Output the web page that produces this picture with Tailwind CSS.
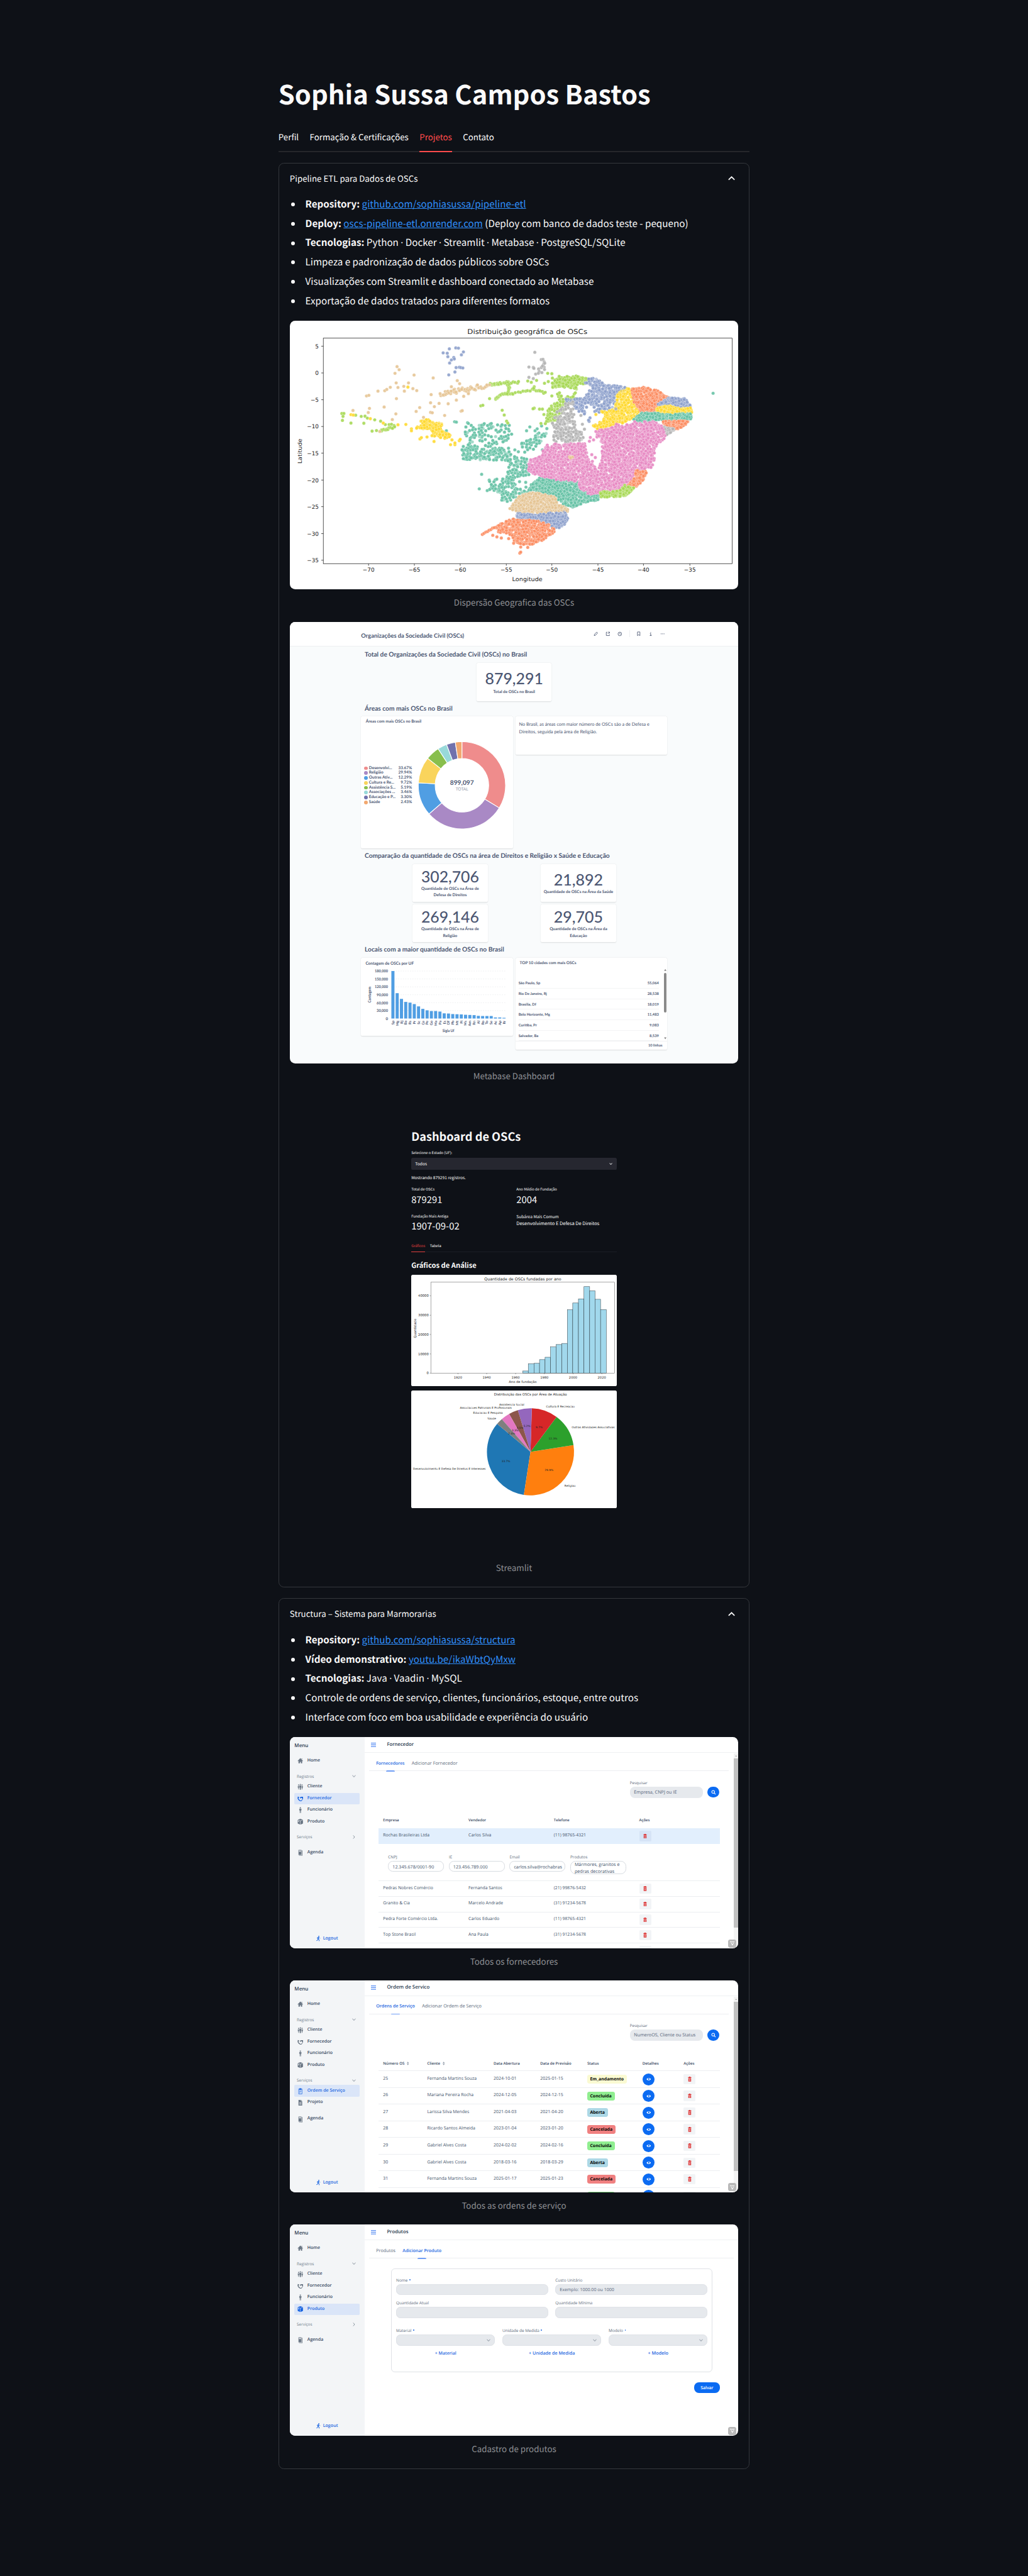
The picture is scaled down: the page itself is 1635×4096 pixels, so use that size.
<!DOCTYPE html>
<html lang="pt-BR">
<head>
<meta charset="utf-8">
<title>Sophia Sussa Campos Bastos</title>
<script src="https://cdn.jsdelivr.net/npm/@tailwindcss/browser@4"></script>
</head>
<body class="bg-[#0e1117] overflow-x-hidden">
<div class="[zoom:0.8515625] [text-rendering:geometricPrecision]">
<div id="page" class="w-[1920px] h-[4810px] overflow-hidden bg-[#0e1117] text-[#fafafa] font-['Noto_Sans_CJK_JP','Noto_Sans_CJK_SC',sans-serif]">
<main class="w-[880px] mx-auto pt-[142px]">
  <h1 class="h-[66px] leading-[66px] text-[49.5px] font-bold whitespace-nowrap"><span data-w="695">Sophia Sussa Campos Bastos</span></h1>

  <nav class="mt-[23.2px] h-[52.5px] flex gap-[20.5px] border-b-[2.5px] border-[#26272b] text-[15.75px] leading-[50px] whitespace-nowrap">
    <span data-g="nav" data-w="38">Perfil</span>
    <span data-g="nav" data-w="184.5">Formação &amp; Certificações</span>
    <span data-g="nav" data-w="60" class="h-[52.5px] border-b-[2.5px] border-[#ff4b4b] text-[#ff4b4b]">Projetos</span>
    <span data-g="nav" data-w="58.5">Contato</span>
  </nav>

  <!-- Pipeline ETL -->
  <section class="mt-5 border-[1.25px] border-[#34373c] rounded-[10px] px-5 pb-[23.2px]">
    <header class="h-[56.7px] flex items-center justify-between text-[15.75px] leading-[26px]">
      <span data-g="nav" data-w="240">Pipeline ETL para Dados de OSCs</span>
      <svg class="mr-[6px] -mt-[1px]" width="13" height="8" viewBox="0 0 13 8" fill="none" stroke="#fafafa" stroke-width="2"><path d="M1 7 6.5 1.5 12 7"/></svg>
    </header>
    <ul class="mt-[1.6px] pl-[9px] text-[18px] leading-[36px] whitespace-nowrap">
      <li class="h-[36px] flex items-center gap-[19px]"><i class="w-[7px] h-[7px] -ml-[6px] mt-[2px] rounded-full bg-[#fafafa]"></i><span><b data-g="li" data-w="98">Repository:</b> <a class="underline text-[#2f8ffb]" data-g="lk" data-w="306">github.com/sophiasussa/pipeline-etl</a></span></li>
      <li class="h-[36px] flex items-center gap-[19px]"><i class="w-[7px] h-[7px] -ml-[6px] mt-[2px] rounded-full bg-[#fafafa]"></i><span><b data-g="li">Deploy:</b> <a class="underline text-[#2f8ffb]" data-g="lk" data-w="260">oscs-pipeline-etl.onrender.com</a> <span data-w="379.5">(Deploy com banco de dados teste - pequeno)</span></span></li>
      <li class="h-[36px] flex items-center gap-[19px]"><i class="w-[7px] h-[7px] -ml-[6px] mt-[2px] rounded-full bg-[#fafafa]"></i><span><b data-g="li">Tecnologias:</b> <span data-g="li">Python <span class="font-['Open_Sans']">·</span> Docker <span class="font-['Open_Sans']">·</span> Streamlit <span class="font-['Open_Sans']">·</span> Metabase <span class="font-['Open_Sans']">·</span> PostgreSQL/SQLite</span></span></li>
      <li class="h-[36px] flex items-center gap-[19px]"><i class="w-[7px] h-[7px] -ml-[6px] mt-[2px] rounded-full bg-[#fafafa]"></i><span data-g="li" data-w="455">Limpeza e padronização de dados públicos sobre OSCs</span></li>
      <li class="h-[36px] flex items-center gap-[19px]"><i class="w-[7px] h-[7px] -ml-[6px] mt-[2px] rounded-full bg-[#fafafa]"></i><span data-g="li" data-w="540">Visualizações com Streamlit e dashboard conectado ao Metabase</span></li>
      <li class="h-[36px] flex items-center gap-[19px]"><i class="w-[7px] h-[7px] -ml-[6px] mt-[2px] rounded-full bg-[#fafafa]"></i><span data-g="li" data-w="457">Exportação de dados tratados para diferentes formatos</span></li>
    </ul>

    <figure class="mt-[19.9px]">
      <div class="h-[501.7px] bg-white rounded-[10px] overflow-hidden"><svg id="scatter" class="block" width="838" height="502" viewBox="0 0 838 502" font-family="DejaVu Sans, sans-serif"></svg></div>
      <figcaption class="mt-[10px] h-[26.4px] leading-[26.4px] text-center text-[15.75px] text-[#8d8f93]"><span data-w="225">Dispersão Geografica das OSCs</span></figcaption>
    </figure>

    <!-- Metabase -->
    <figure class="mt-[24.4px]">
      <div class="h-[824.2px] bg-[#f9fbfc] rounded-[10px] overflow-hidden font-['Lato',sans-serif] text-[#4c5773] whitespace-nowrap">
        <div class="h-[46px] bg-white border-b border-[#eeeff1] flex items-center justify-between pl-[133.3px] pr-[137px] pt-[6px] font-bold text-[10.5px]">
          <span data-w="192.5">Organizações da Sociedade Civil (OSCs)</span>
          <div class="flex items-center gap-[13px] -mt-[7px]">
            <svg width="9" height="9" viewBox="0 0 9 9" fill="none" stroke="#4c5773" stroke-width="1"><path d="M1.2 7.8 1.8 5.4 6 1.2 7.7 2.9 3.5 7.2Z"/></svg>
            <svg width="9" height="9" viewBox="0 0 9 9" fill="none" stroke="#4c5773" stroke-width="1"><path d="M3.6 1.5H1.5V7.7H7.4V5.6M5 1.2H7.6V3.8M7.4 1.4 4.2 4.8"/></svg>
            <svg width="9" height="9" viewBox="0 0 9 9" fill="none" stroke="#4c5773" stroke-width="1"><circle cx="4.5" cy="4.7" r="3.4"/><path d="M4.5 2.8V4.8L5.8 5.6"/></svg>
            <i class="w-px h-[13px] bg-[#eceef0]"></i>
            <svg width="9" height="9" viewBox="0 0 9 9" fill="none" stroke="#4c5773" stroke-width="1"><path d="M2.2 1H6.8V8L4.5 6 2.2 8Z"/></svg>
            <svg width="9" height="9" viewBox="0 0 9 9" fill="none" stroke="#4c5773" stroke-width="1.1"><path d="M3.3 4H4.7V7.6M3 7.7H6.3M4.6 1.2V2.4"/></svg>
            <svg width="9" height="9" viewBox="0 0 9 9" fill="#4c5773"><circle cx="1.8" cy="4.5" r=".8"/><circle cx="4.5" cy="4.5" r=".8"/><circle cx="7.2" cy="4.5" r=".8"/></svg>
          </div>
        </div>
        <div class="w-[571.6px] ml-[133.3px]">
          <h3 class="h-[30.3px] pl-[6.7px] leading-[32px] text-[11.5px] font-bold"><span data-g="mh" data-w="304">Total de Organizações da Sociedade Civil (OSCs) no Brasil</span></h3>
          <div class="w-[140.4px] h-[71px] mx-auto bg-white rounded-[3px] shadow-[0_1px_2px_rgba(0,0,0,.12)] text-center pt-[14px]">
            <div class="h-[32px] leading-[32px] text-[29.5px]"><span class="font-medium" data-w="108.6">879,291</span></div>
            <div class="h-[12px] leading-[13px] text-[7.5px] mt-[1.5px] font-bold"><span data-g="ml" data-w="77.9">Total de OSCs no Brasil</span></div>
          </div>
          <h3 class="h-[29px] pl-[6.7px] leading-[30px] text-[11.5px] font-bold"><span data-g="mh" data-w="163.5">Áreas com mais OSCs no Brasil</span></h3>
          <div class="flex gap-[4.4px] items-start">
            <div class="w-[283.6px] h-[246.7px] bg-white rounded-[3px] shadow-[0_1px_2px_rgba(0,0,0,.12)]">
              <div class="pl-[8.7px] h-[21px] leading-[20px] text-[7.5px] font-bold"><span data-g="ml" data-w="104">Áreas com mais OSCs no Brasil</span></div>
              <div class="flex items-center h-[215px]">
                <div id="legend" class="w-[95px] ml-[6px]"></div>
                <svg id="donut" class="ml-[4px]" width="166" height="166" viewBox="-83 -83 166 166" font-family="Lato, sans-serif"></svg>
              </div>
            </div>
            <div class="w-[283.6px] h-[71px] bg-white rounded-[3px] shadow-[0_1px_2px_rgba(0,0,0,.12)] pl-[7.1px] pt-[8.4px] text-[8px] leading-[14px]">
              <p class="h-[14px]"><span data-w="243">No Brasil, as áreas com maior número de OSCs são a de Defesa e</span></p>
              <p class="h-[14px]"><span data-w="145.4">Direitos, seguida pela área de Religião.</span></p>
            </div>
          </div>
          <h3 class="h-[28.5px] pl-[6.7px] leading-[29.5px] text-[11.5px] font-bold"><span data-g="mh" data-w="457.5">Comparação da quantidade de OSCs na área de Direitos e Religião x Saúde e Educação</span></h3>
          <div id="kpis" class="grid grid-cols-[140.4px_140.4px] gap-x-[99.3px] gap-y-[4px] ml-[96px]"></div>
          <h3 class="h-[29px] pl-[6.7px] leading-[30px] text-[11.5px] font-bold"><span data-g="mh" data-w="260">Locais com a maior quantidade de OSCs no Brasil</span></h3>
          <div class="flex gap-[4.4px] items-start">
            <div class="w-[283.6px] h-[146.3px] bg-white rounded-[3px] shadow-[0_1px_2px_rgba(0,0,0,.12)]"><svg id="ufbars" class="block" width="283.6" height="146.3" viewBox="0 0 283.6 146.3" font-family="Lato, sans-serif" fill="#4c5773"></svg></div>
            <div class="w-[283.6px] h-[171.3px] bg-white rounded-[3px] shadow-[0_1px_2px_rgba(0,0,0,.12)] flex flex-col text-[7px]">
              <div class="pl-[8.2px] h-[20.5px] leading-[20.5px] text-[7.5px] font-bold"><span data-w="105.8">TOP 10 cidades com mais OSCs</span></div>
              <div class="flex h-[135.1px]">
                <div id="cities" class="flex-1 pt-[17.6px] pl-[6px] pr-[9px] font-bold"></div>
                <div class="w-[5px] mr-[1.5px] flex flex-col items-center">
                  <svg width="5" height="5" viewBox="0 0 5 5" fill="#858585"><path d="M.3 4.5 2.5 1 4.7 4.5Z"/></svg>
                  <i class="mt-[3px] w-[4.6px] h-[74px] rounded-full bg-[#8a8a8a]"></i>
                  <svg class="mt-auto mb-[2px]" width="5" height="5" viewBox="0 0 5 5" fill="#858585"><path d="M.3 .5 2.5 4 4.7 .5Z"/></svg>
                </div>
              </div>
              <div class="flex-1 border-t border-[#f0f1f2] text-right pr-[9px] leading-[16px] font-bold"><span data-w="26.5">10 linhas</span></div>
            </div>
          </div>
        </div>
      </div>
      <figcaption class="mt-[10px] h-[26.4px] leading-[26.4px] text-center text-[15.75px] text-[#8d8f93]"><span data-w="152.5">Metabase Dashboard</span></figcaption>
    </figure>

    <!-- Streamlit -->
    <figure class="mt-[24.4px]">
      <div class="h-[857.2px] pt-[64px] rounded-[10px] overflow-hidden whitespace-nowrap">
        <div class="w-[384px] ml-[227px]">
          <div class="h-[25px] leading-[25px] text-[21.5px] font-bold"><span data-w="204.5">Dashboard de OSCs</span></div>
          <div class="mt-[12.5px] h-[10px] leading-[10px] text-[6.6px]"><span data-g="sl" data-w="76.7">Selecione o Estado (UF):</span></div>
          <div class="mt-[4.5px] h-[21.5px] rounded-[3px] bg-[#262730] pl-[7.3px] pr-[8px] flex items-center justify-between text-[7.5px] leading-[20px]">
            <span class="-mt-[1px]" data-w="22">Todos</span>
            <svg width="6" height="4" viewBox="0 0 6 4" fill="none" stroke="#d5d6d8" stroke-width="1.2"><path d="M.6 .6 3 3 5.4 .6"/></svg>
          </div>
          <div class="mt-[9.5px] h-[10px] leading-[10px] text-[7.5px]"><span data-w="102">Mostrando 879291 registros.</span></div>
          <div class="mt-[12.5px] grid grid-cols-[196.3px_1fr]">
            <div class="h-[50px]">
              <div class="h-[10px] leading-[10px] text-[6.6px]"><span data-g="sl" data-w="43.5">Total de OSCs</span></div>
              <div class="mt-[4px] h-[20px] leading-[20px] text-[17px]"><span data-w="58">879291</span></div>
            </div>
            <div class="h-[50px]">
              <div class="h-[10px] leading-[10px] text-[6.6px]"><span data-g="sl" data-w="76">Ano Médio de Fundação</span></div>
              <div class="mt-[4px] h-[20px] leading-[20px] text-[17px]"><span data-w="38.7">2004</span></div>
            </div>
            <div class="h-[50px]">
              <div class="h-[10px] leading-[10px] text-[6.6px]"><span data-g="sl" data-w="69">Fundação Mais Antiga</span></div>
              <div class="mt-[4px] h-[20px] leading-[20px] text-[17px]"><span data-w="90">1907-09-02</span></div>
            </div>
            <div class="h-[50px]">
              <div class="h-[10px] leading-[10px] text-[7.5px]"><span data-w="79">Subárea Mais Comum</span></div>
              <div class="mt-[5px] h-[10px] leading-[10px] text-[7.5px]"><span data-w="155">Desenvolvimento E Defesa De Direitos</span></div>
            </div>
          </div>
          <div class="mt-[3.2px] h-[19.5px] border-b-[1.5px] border-[#1b1e25] flex gap-[9px] text-[6.8px] leading-[14px]">
            <span class="h-[19.5px] border-b-[1.5px] border-[#e0403f] text-[#e0403f]" data-w="25.8">Gráficos</span>
            <span data-w="21">Tabela</span>
          </div>
          <div class="mt-[15px] h-[20px] leading-[20px] text-[13.5px] font-bold"><span data-w="121.7">Gráficos de Análise</span></div>
          <div class="mt-[7px] h-[207.4px] bg-white rounded-[3px]"><svg id="years" class="block" width="384" height="207.4" viewBox="0 0 384 207.4" font-family="DejaVu Sans, sans-serif" fill="#222"></svg></div>
          <div class="mt-[8.5px] h-[220px] bg-white rounded-[3px]"><svg id="pie" class="block" width="384" height="220" viewBox="0 0 384 220" font-family="DejaVu Sans, sans-serif" fill="#222"></svg></div>
        </div>
      </div>
      <figcaption class="mt-[10px] h-[26.4px] leading-[26.4px] text-center text-[15.75px] text-[#8d8f93]"><span data-w="67.5">Streamlit</span></figcaption>
    </figure>
  </section>

  <!-- Structura -->
  <section class="mt-5 border-[1.25px] border-[#34373c] rounded-[10px] px-5 pb-[24px]">
    <header class="h-[56.7px] flex items-center justify-between text-[15.75px] leading-[26px]">
      <span data-g="nav" data-w="273.5">Structura – Sistema para Marmorarias</span>
      <svg class="mr-[6px] -mt-[1px]" width="13" height="8" viewBox="0 0 13 8" fill="none" stroke="#fafafa" stroke-width="2"><path d="M1 7 6.5 1.5 12 7"/></svg>
    </header>
    <ul class="mt-[1.6px] pl-[9px] text-[18px] leading-[36px] whitespace-nowrap">
      <li class="h-[36px] flex items-center gap-[19px]"><i class="w-[7px] h-[7px] -ml-[6px] mt-[2px] rounded-full bg-[#fafafa]"></i><span><b data-g="li">Repository:</b> <a class="underline text-[#2f8ffb]" data-g="lk" data-w="286.5">github.com/sophiasussa/structura</a></span></li>
      <li class="h-[36px] flex items-center gap-[19px]"><i class="w-[7px] h-[7px] -ml-[6px] mt-[2px] rounded-full bg-[#fafafa]"></i><span><b data-g="li">Vídeo demonstrativo:</b> <a class="underline text-[#2f8ffb]" data-g="lk" data-w="200">youtu.be/ikaWbtQyMxw</a></span></li>
      <li class="h-[36px] flex items-center gap-[19px]"><i class="w-[7px] h-[7px] -ml-[6px] mt-[2px] rounded-full bg-[#fafafa]"></i><span><b data-g="li">Tecnologias:</b> <span data-g="li">Java <span class="font-['Open_Sans']">·</span> Vaadin <span class="font-['Open_Sans']">·</span> MySQL</span></span></li>
      <li class="h-[36px] flex items-center gap-[19px]"><i class="w-[7px] h-[7px] -ml-[6px] mt-[2px] rounded-full bg-[#fafafa]"></i><span data-g="li" data-w="623">Controle de ordens de serviço, clientes, funcionários, estoque, entre outros</span></li>
      <li class="h-[36px] flex items-center gap-[19px]"><i class="w-[7px] h-[7px] -ml-[6px] mt-[2px] rounded-full bg-[#fafafa]"></i><span data-g="li" data-w="529">Interface com foco em boa usabilidade e experiência do usuário</span></li>
    </ul>

    <figure class="mt-[19.5px]">
      <div id="appA" class="relative h-[395.2px] flex bg-white rounded-[10px] overflow-hidden font-['Open_Sans',sans-serif] text-[#42526a] text-[7.4px] whitespace-nowrap"></div>
      <figcaption class="mt-[10px] h-[26.4px] leading-[26.4px] text-center text-[15.75px] text-[#8d8f93]"><span data-w="164">Todos os fornecedores</span></figcaption>
    </figure>
    <figure class="mt-[22.8px]">
      <div id="appB" class="relative h-[396px] flex bg-white rounded-[10px] overflow-hidden font-['Open_Sans',sans-serif] text-[#42526a] text-[7.4px] whitespace-nowrap"></div>
      <figcaption class="mt-[10px] h-[26.4px] leading-[26.4px] text-center text-[15.75px] text-[#8d8f93]"><span data-w="195.3">Todos as ordens de serviço</span></figcaption>
    </figure>
    <figure class="mt-[23.3px]">
      <div id="appC" class="relative h-[395.2px] flex bg-white rounded-[10px] overflow-hidden font-['Open_Sans',sans-serif] text-[#42526a] text-[7.4px] whitespace-nowrap"></div>
      <figcaption class="mt-[10px] h-[26.4px] leading-[26.4px] text-center text-[15.75px] text-[#8d8f93]"><span data-w="158">Cadastro de produtos</span></figcaption>
    </figure>
  </section>
</main>
</div>
</div>

<script>
const $ = id => document.getElementById(id);

/* ---------- shared SVG text helper ---------- */
const txt = (x, y, s, size, o = {}) =>
  `<text x="${x}" y="${y}" font-size="${size}" text-anchor="${o.a || 'middle'}"${o.w ? ` textLength="${o.w}" lengthAdjust="spacingAndGlyphs"` : ''}${o.f ? ` fill="${o.f}"` : ''}${o.b ? ` font-weight="${o.b}"` : ''}${o.r ? ` transform="rotate(-90 ${x} ${y})"` : ''}>${s}</text>`;

/* ---------- scatter map ---------- */
(() => {
  let seed = 7;
  const rnd = () => { seed = (seed * 1664525 + 1013904223) >>> 0; return seed / 4294967296; };
  const C = { t: '#66c2a5', o: '#fc8d62', b: '#8da0cb', p: '#e78ac3', g: '#a6d854', y: '#ffd92f', s: '#e5c494', k: '#b3b3b3' };
  const inside = (P, x, y) => { let c = false; for (let i = 0, j = P.length - 1; i < P.length; j = i++) if ((P[i][1] > y) !== (P[j][1] > y) && x < (P[j][0] - P[i][0]) * (y - P[i][1]) / (P[j][1] - P[i][1]) + P[i][0]) c = !c; return c; };
  const sx = u => (u - 20) / 1.823, sy = v => (v - 25) / 2.8;
  let out = '';
  const dot = (c, u, v, a = .9) => { out += `<circle cx="${sx(u).toFixed(1)}" cy="${sy(v).toFixed(1)}" r="3.1" fill="${C[c]}" fill-opacity="${a}"/>`; };
  const poly = (c, n, P, dmin = 1.9) => {
    const xs = P.map(p => p[0]), ys = P.map(p => p[1]);
    const x0 = Math.min(...xs), x1 = Math.max(...xs), y0 = Math.min(...ys), y1 = Math.max(...ys);
    const pts = []; let tries = 0;
    while (pts.length < n && tries++ < n * 40) {
      const x = x0 + rnd() * (x1 - x0), y = y0 + rnd() * (y1 - y0);
      if (!inside(P, x, y)) continue;
      if (pts.some(q => Math.hypot((q[0] - x) / 1.823, (q[1] - y) / 2.8) < dmin)) continue;
      pts.push([x, y]); dot(c, x, y, rnd() < .12 ? .6 : .95);
    }
  };
  const line = (c, n, L, j = 5) => { for (let i = 0; i < n; i++) { const t = i / n * (L.length - 1), k = Math.floor(t), f = t - k; dot(c, L[k][0] + (L[k + 1][0] - L[k][0]) * f + (rnd() - .5) * j, L[k][1] + (L[k + 1][1] - L[k][1]) * f + (rnd() - .5) * j * 2); } };
  const pts = (c, A) => { for (let i = 0; i < A.length; i += 2) dot(c, A[i], A[i + 1]); };

  poly('t', 90, [[615,570],[700,565],[770,565],[780,620],[755,660],[700,690],[660,700],[600,690],[640,660],[610,620]], 3);
  poly('t', 95, [[600,700],[690,690],[765,690],[780,755],[700,755],[605,750]], 2.4);
  poly('t', 34, [[805,660],[850,630],[885,590],[895,620],[860,690],[820,715]], 3);
  poly('t', 62, [[760,735],[830,735],[835,830],[790,850],[755,880],[760,800]], 3);
  poly('t', 85, [[695,855],[780,840],[790,900],[840,920],[770,970],[740,970],[735,925],[700,910]], 2.6);
  pts('t', [673,828,665,904,692,913,581,553,587,555,837,580,862,590,877,575,895,589,553,600,802,866,823,870,824,895,783,781,810,665,880,700,625,558,682,563,706,562,628,562,1461,404,786,700,798,710,855,600,826,600]);
  poly('g', 130, [[912,345],[940,318],[1000,312],[1042,330],[1028,352],[990,362],[1000,385],[940,370],[915,378]], 1.7);
  poly('g', 85, [[935,400],[945,420],[990,405],[995,440],[960,480],[935,545],[905,560],[890,555],[890,510],[915,460],[940,450],[925,415]], 2.4);
  line('g', 24, [[703,357],[735,352],[805,345]]); line('g', 34, [[720,437],[740,408],[780,405],[850,385],[895,405]], 4);
  line('g', 12, [[756,342],[768,372],[756,410]]);
  pts('g', [700,432,670,470,677,467,743,493,750,518,758,550,762,560,830,340,842,347,860,337,887,352,900,343,852,482,848,485,870,487,880,487,898,300,912,302,914,325,937,316,852,370,850,378,875,562,890,563,912,418,938,402,992,402,885,515]);
  pts('g', [197,510,204,510,201,525,199,546,228,560,244,519,263,525,276,524,284,534,309,543,329,550,272,561,300,602,315,599,345,568,358,568,366,566,375,573]);
  line('g', 14, [[330,598],[378,582]]);
  poly('y', 95, [[465,550],[490,540],[520,560],[538,558],[535,600],[560,615],[572,630],[545,640],[510,628],[500,590],[460,592],[440,585],[465,575]], 2);
  pts('y', [434,590,434,600,415,567,388,569,463,643,468,636,487,633,504,626,511,656,567,673,582,673,572,648,582,664,597,652,600,645,422,372,228,516,236,518,294,537,338,560]);
  pts('s', [385,265,392,281,378,300,443,309,508,324,590,338,598,354,382,350,424,350,388,374,408,368,439,380,452,390,410,393,320,393,343,391,350,384,362,373,281,418,289,415,383,432,341,476,291,483,287,505,235,494,381,512,369,542,501,411,499,454,528,457,512,474,462,479,450,499,499,504,505,506,559,459,587,440,612,420,547,520,475,530,603,498,607,495,570,370,628,400,628,406,587,404,326,604]);
  line('s', 52, [[533,405],[560,400],[590,385],[630,385],[660,372],[704,370]], 12);
  pts('b', [563,172,585,167,594,168,542,193,556,195,611,188,604,203,558,213,578,217,580,225,570,230,564,246,586,270,597,268,602,270,609,272,582,293,561,308]);
  pts('k', [854,190,876,228,882,227,886,240,884,253,886,268,887,280,876,270,867,277,849,269,851,274,834,267,869,290,878,296,857,304,866,300,834,321,849,327,888,247,880,262]);
  poly('b', 210, [[1028,332],[1055,325],[1085,345],[1090,362],[1130,365],[1170,375],[1150,400],[1132,430],[1125,470],[1110,490],[1080,502],[1050,505],[1065,490],[1022,440],[1035,385],[1045,375],[1025,350]], 1.8);
  poly('b', 42, [[955,435],[1025,430],[1035,500],[1020,515],[990,485],[985,450],[960,445]], 2.4);
  pts('b', [1042,533,1039,551,1037,545]);
  poly('k', 150, [[960,455],[985,445],[990,500],[985,540],[1000,590],[1020,610],[1022,660],[970,662],[915,658],[920,600],[912,550],[930,500]], 2.1);
  pts('k', [1011,520,1016,566,1023,592]);
  poly('y', 250, [[1160,375],[1188,375],[1192,440],[1210,490],[1205,530],[1155,560],[1110,575],[1075,600],[1050,572],[1085,550],[1095,515],[1080,497],[1125,490],[1135,410]], 1.8);
  pts('y', [1062,515]); pts('k', [1130,486]);
  poly('o', 230, [[1183,380],[1225,372],[1270,390],[1312,428],[1290,450],[1270,465],[1275,480],[1265,505],[1215,500],[1192,450]], 1.6);
  poly('b', 150, [[1308,428],[1368,432],[1387,475],[1350,485],[1305,470],[1280,475],[1273,462]], 1.5);
  poly('y', 130, [[1268,482],[1310,468],[1350,485],[1387,480],[1388,505],[1350,505],[1320,517],[1268,500]], 1.5);
  poly('t', 190, [[1190,540],[1215,505],[1265,508],[1320,515],[1390,508],[1385,538],[1330,547],[1270,545],[1212,556]], 1.7);
  poly('o', 85, [[1285,550],[1378,548],[1365,575],[1338,592],[1310,575],[1290,572]], 1.5);
  poly('k', 60, [[1290,578],[1332,592],[1300,625],[1288,610]], 1.4);
  poly('t', 420, [[870,845],[930,855],[1000,862],[1010,905],[1078,930],[1072,962],[1030,972],[980,1003],[945,988],[925,945],[880,925],[832,915],[845,870]], 1.6);
  poly('p', 1700, [[1075,595],[1140,570],[1200,560],[1260,552],[1285,570],[1302,630],[1275,668],[1262,700],[1263,740],[1250,800],[1215,808],[1192,830],[1178,880],[1145,912],[1040,932],[1010,908],[1000,865],[930,857],[870,835],[830,812],[835,760],[872,735],[885,690],[900,665],[960,668],[1025,665],[1032,720],[1040,770],[1075,785],[1085,740],[1078,640],[1060,630]], 1.6);
  pts('p', [1043,635,1054,648,1040,655,1194,553,1228,553,1062,604,1132,566,1048,725,1060,740,1050,760,840,752]);
  poly('o', 80, [[1198,805],[1237,812],[1222,860],[1200,893],[1173,885],[1190,850],[1195,825]], 1.6);
  poly('g', 100, [[1076,920],[1140,914],[1160,885],[1195,900],[1165,942],[1076,948]], 1.6);
  poly('s', 330, [[800,940],[850,922],[925,945],[930,985],[967,1005],[967,1022],[920,1025],[850,1040],[795,1028],[768,1010],[780,970]], 1.6);
  poly('b', 210, [[793,1030],[850,1040],[960,1020],[967,1065],[950,1100],[925,1118],[905,1090],[860,1075],[793,1057]], 1.6);
  poly('o', 300, [[780,1060],[860,1070],[920,1100],[922,1125],[905,1152],[880,1165],[850,1195],[820,1200],[785,1180],[775,1145],[730,1130],[720,1105],[745,1080]], 1.8);
  line('o', 8, [[676,1142],[722,1100]], 2);
  pts('o', [711,1147,725,1155,740,1161,765,1164,782,1188,806,1208,830,1210,845,1193,803,1240,806,1235,878,1173,884,1167,805,1190]);
  pts('s', [972,737,978,738,982,738,976,742]);

  let ax = '';
  [288,444,600,757,912,1069,1224,1382].forEach((u, i) => { const x = sx(u); ax += `<path d="M${x} 453.6v3.8" stroke="#222" stroke-width=".9"/>` + txt(x, 469, '−' + (70 - 5 * i), 10.4, { w: 22 }); });
  [158,298,438,578,717,858,997,1138,1277].forEach((v, i) => { const n = 5 - 5 * i, y = sy(v); ax += `<path d="M62.5 ${y}h-3.8" stroke="#222" stroke-width=".9"/>` + txt(54, y + 3.8, n < 0 ? '−' + -n : n, 10.4, { a: 'end' }); });
  $('scatter').innerHTML = `<g fill="#1a1a1a">${ax}${txt(443.5, 25, 'Distribuição geográfica de OSCs', 12.5, { w: 224 })}${txt(443.5, 486, 'Longitude', 10.4, { w: 56.5 })}${txt(22, 243.6, 'Latitude', 10.4, { w: 46.8, r: 1 })}</g><g stroke="#fff" stroke-width=".4">${out}</g><rect x="62.5" y="32.5" width="763.5" height="421.1" fill="none" stroke="#222" stroke-width=".9"/>`;
})();

/* ---------- Metabase dashboard ---------- */
(() => {
  const D = [['Desenvolvi...', 33.67, '#ef8c8c'], ['Religião', 29.94, '#a989c5'], ['Outras Ativ...', 12.29, '#509ee3'], ['Cultura e Re...', 9.72, '#f9d45c'], ['Assistência S...', 5.19, '#88bf4d'], ['Associações ...', 3.46, '#98d9d9'], ['Educação e P...', 3.30, '#7172ad'], ['Saúde', 2.43, '#f2a86f']];
  $('legend').innerHTML = D.map(d => `<div class="flex items-center h-[9.15px] leading-[9px] text-[7.2px] font-bold"><i class="w-[6.6px] h-[6.6px] rounded-full mr-[2px]" style="background:${d[2]}"></i><span data-g="lg"${d[0][0] === 'D' ? ' data-w="43.3"' : ''}>${d[0]}</span><span class="ml-auto pr-[6px]" data-g="lp"${d[1] === 33.67 ? ' data-w="25.5"' : ''}>${d[1].toFixed(2)}%</span></div>`).join('');
  let a = 0, s = '';
  const P = (r, t) => [r * Math.sin(t), -r * Math.cos(t)].map(n => n.toFixed(2)).join(' ');
  D.forEach(d => { const b = a + d[1] / 100 * 2 * Math.PI, L = b - a > Math.PI ? 1 : 0; s += `<path d="M${P(81.5, a)}A81.5 81.5 0 ${L} 1 ${P(81.5, b)}L${P(50, b)}A50 50 0 ${L} 0 ${P(50, a)}Z" fill="${d[2]}" stroke="#fff" stroke-width="1.3"/>`; a = b; });
  $('donut').innerHTML = s + txt(0, -.8, '899,097', 11.8, { w: 44.4, f: '#4c5773', b: 700 }) + txt(0, 10, 'TOTAL', 8, { w: 23.6, f: '#949aab' });

  $('kpis').innerHTML = [['302,706', 108, 'Quantidade de OSCs na Área de', 'Defesa de Direitos'], ['21,892', 92, 'Quantidade de OSCs na Área da Saúde', ''], ['269,146', 108, 'Quantidade de OSCs na Área de', 'Religião'], ['29,705', 92, 'Quantidade de OSCs na Área da', 'Educação']].map(k =>
    `<div class="h-[71.2px] flex flex-col justify-center bg-white rounded-[3px] shadow-[0_1px_2px_rgba(0,0,0,.12)] text-center pt-[2px]"><div class="h-[30px] leading-[30px] text-[29.5px]"><span class="font-medium" data-w="${k[1]}">${k[0]}</span></div><div class="h-[12.2px] leading-[16px] text-[7.5px] font-bold"><span data-g="ml">${k[2]}</span></div>${k[3] ? `<div class="h-[12.2px] leading-[16px] text-[7.5px] font-bold"><span data-g="ml">${k[3]}</span></div>` : ''}</div>`).join('');

  const X = u => (u - 263) / 1.823, Y = v => (v - 626) / 3;
  let g = txt(8.7, 13, 'Contagem de OSCs por UF', 7.8, { a: 'start', w: 90, b: 700 });
  ['180,000', '150,000', '120,000', '90,000', '60,000', '30,000', '0'].forEach((t, i) => { const v = 700 + i * 44.3; g += txt(X(355), Y(v) + 2.6, t, 7.2, { a: 'end', b: 700, w: [24.5, 24.5, 24.5, 21, 21, 21, 4.2][i] }); if (i < 6) g += `<path d="M${X(366)} ${Y(v)}H${X(758)}" stroke="#e3e5e8" stroke-width=".7" stroke-dasharray="2 2.4"/>`; });
  const T = [700,824,856,873,877,885,898,912,920,924,924,927,937,938,941,942,943,945,946,947,951,952,952,952,960,960,962];
  'Sp Mg Rj Ba Rs Pr Sc Ce Pe Go Ma Pa Es Df Pb Mt Pi Ms Am Rn Al Ro To Se Ac Ap Rr'.split(' ').forEach((n, i) => { const c = X(372 + i * 14.55); g += `<rect x="${c - 2.9}" y="${Y(T[i])}" width="5.8" height="${Y(966) - Y(T[i])}" fill="#509ee3"/>` + txt(c + 2.4, Y(978), n, 6.6, { a: 'end', r: 1, b: 700 }); });
  g += txt(19, Y(832), 'Contagem', 7.6, { r: 1, w: 30, b: 700 }) + txt(X(561), Y(1041), 'Sigla Uf', 7.4, { w: 22, b: 700 });
  $('ufbars').innerHTML = g;

  $('cities').innerHTML = [['São Paulo, Sp', '55,064'], ['Rio De Janeiro, Rj', '28,538'], ['Brasília, Df', '18,019'], ['Belo Horizonte, Mg', '11,483'], ['Curitiba, Pr', '9,083'], ['Salvador, Ba', '8,539']].map((c, i) =>
    `<div class="flex justify-between h-[19.6px] leading-[20px] border-b border-[#f3f4f5]"><span data-g="ct"${i ? '' : ' data-w="40.5"'}>${c[0]}</span><span data-g="ct">${c[1]}</span></div>`).join('');
})();

/* ---------- Streamlit charts ---------- */
(() => {
  let X = u => (u - 84) / 3, Y = v => (v - 75) / 2.45;
  let s = txt(X(709), 10.4, 'Quantidade de OSCs fundadas por ano', 7.4, { w: 143.7 });
  const E = [709,740,772,803,834,865,896,928,959,989,1021,1052,1084,1114,1145,1177], H = [515,482,480,463,452,405,394,389,235,204,185,129,148,187,234];
  H.forEach((h, i) => s += `<rect x="${X(E[i])}" y="${Y(h)}" width="${X(E[i + 1]) - X(E[i])}" height="${Y(525) - Y(h)}" fill="#a1d8ec" stroke="#2b3a41" stroke-width=".6"/>`);
  s += `<rect x="${X(194)}" y="${Y(109)}" width="343" height="${Y(525) - Y(109)}" fill="none" stroke="#555" stroke-width=".6"/>`;
  [525,437,348,260,171].forEach((v, i) => s += `<path d="M${X(194)} ${Y(v)}h-2" stroke="#444" stroke-width=".6"/>` + txt(X(182), Y(v) + 2.3, i * 10000, 6.2, { a: 'end' }));
  [346,507,669,830,991,1152].forEach((u, i) => s += `<path d="M${X(u)} ${Y(525)}v2" stroke="#444" stroke-width=".6"/>` + txt(X(u), 193.3, 1920 + i * 20, 6.1));
  s += txt(X(709), 201.8, 'Ano de fundação', 6.1, { w: 52 }) + txt(9.7, 100, 'Quantidade', 6.1, { r: 1, w: 36 });
  $('years').innerHTML = s;

  Y = v => (v - 604) / 2.45;
  const cx = 222.8, cy = 114.5, R = 81.3; let a = 140; s = '';
  const P = t => `${(cx + R * Math.cos(t * Math.PI / 180)).toFixed(2)} ${(cy - R * Math.sin(t * Math.PI / 180)).toFixed(2)}`;
  [[33.67, '#1f77b4'], [29.94, '#ff7f0e'], [12.29, '#2ca02c'], [9.72, '#d62728'], [5.19, '#9467bd'], [3.46, '#8c564b'], [3.3, '#e377c2'], [2.43, '#7f7f7f']].forEach(d => { const b = a + d[0] * 3.6; s += `<path d="M${cx} ${cy}L${P(a)}A${R} ${R} 0 0 0 ${P(b)}Z" fill="${d[1]}"/>`; a = b; });
  s += txt(X(752), Y(622) + 2.6, 'Distribuição das OSCs por Área de Atuação', 6.4, { w: 136 });
  [['Assistencia Social', 577, 717, 667], ['Associacoes Patronais E Profissionais', 357, 647, 683], ['Educacao E Pesquisa', 431, 597, 706], ['Saude', 511, 560, 731], ['Cultura E Recreacao', 840, 1000, 677], ['Outras Atividades Associativas', 983, 1224, 771], ['Desenvolvimento E Defesa De Direitos E Interesses', 95, 501, 962], ['Religiao', 943, 1005, 1039]].forEach(l => s += txt(X(l[1]), Y(l[3]) + 1.9, l[0], 5.2, { a: 'start', w: (l[2] - l[1]) / 3 }));
  [['5.2%', 733, 766], ['9.7%', 801, 772], ['12.3%', 878, 823], ['29.9%', 856, 969], ['33.7%', 615, 927], ['2.4%', 647, 801], ['3.3%', 667, 787], ['3.5%', 694, 775]].forEach(l => s += txt(X(l[1]), Y(l[2]) + 1.9, l[0], 5.1));
  $('pie').innerHTML = s;
})();

/* ---------- Structura screens ---------- */
(() => {
  const svg = (w, h, vb, b) => `<svg width="${w}" height="${h}" viewBox="${vb}" fill="currentColor">${b}</svg>`;
  const ic = {
    Home: svg(11, 11, '0 0 16 16', '<path d="M15.5 8.5 8 1 .5 8.5l1 1L3 8.2V15h3.7v-4h2.6v4H13V8.2l1.500 1.300zM11 1.500h2v3l-2-2z"/>'),
    Cliente: svg(12, 12, '0 0 16 16', '<circle cx="3.300" cy="3" r="1.500"/><circle cx="8" cy="2" r="1.700"/><circle cx="12.700" cy="3" r="1.500"/><path d="M1.200 5.500h3.400v5.500h-.7v4H2.300v-4H1.200zM5.600 4.500h4.800v6h-.9V16h-3v-5.500h-.9zM11.400 5.500h3.400v5.500h-1.100v4h-1.600v-4h-.7z"/>'),
    Fornecedor: svg(11, 10, '0 0 16 14', '<path d="M1 1 5 2 3 7l6 5 2-1 3-4-3-3-3 2-1.500-1.500L9 1.500h6.500V7l-4 6L8 14 2.500 10 .5 6z"/>'),
    'Funcionário': svg(11, 12, '0 0 16 16', '<circle cx="8" cy="1.800" r="1.800"/><path d="M5 4.200h6v5h-1V6.500h-.3V16H8.400v-5h-.8v5H6.300V6.500H6v2.700H5z"/>'),
    Produto: svg(11, 11, '0 0 16 16', '<path d="M8 0 1 2.500 8 5l7-2.500zM.8 3.500v9.500L7.500 16V6zM15.200 3.500v9.500L8.500 16V6zM2 5l2 .8v3L2 8z" fill-rule="evenodd"/>'),
    'Ordem de Serviço': svg(11, 12, '0 0 16 16', '<path d="M3 1.500h2.500V0h5v1.500H13V16H3zM4.300 3v11.700h7.400V3h-1v1.200H5.300V3zM5.500 6h5v1h-5zM5.500 8.500h5v1h-5zM5.500 11h3v1h-3z" fill-rule="evenodd"/>'),
    Projeto: svg(11, 11, '0 0 16 16', '<path d="M3 0h6.500v4H13v12H3zM5 7v1h6V7zM5 9.500v1h6v-1zM5 12v1h6v-1zM10.500 0 13 3h-2.500z" fill-rule="evenodd"/>'),
    Agenda: svg(11, 12, '0 0 16 16', '<path d="M3 0h8v14H3zM4.500 2v3h5V2zM12 1.500h1.500V16H4.500v-1H12z" fill-rule="evenodd"/>')
  };
  const W = { Home: 24, Cliente: 27.2, Fornecedor: 44.8, 'Funcionário': 46.6, Produto: 32.4, 'Ordem de Serviço': 71.3, Projeto: 28.5, Agenda: 31 };
  const chev = up => up ? '<svg width="7" height="5" viewBox="0 0 7 5" fill="none" stroke="#76828f" stroke-width="1"><path d="M.6 .8 3.500 4.200 6.400 .8"/></svg>' : '<svg class="mr-[1px]" width="5" height="7" viewBox="0 0 5 7" fill="none" stroke="#76828f" stroke-width="1"><path d="M1 .5 3.500 3.500 1 6.500"/></svg>';
  const item = (n, sel) => `<div class="h-[21.85px] ml-[8.8px] mr-[9.4px] pl-[5.3px] flex items-center gap-[7.8px] rounded-[2px] text-[8px] font-semibold ${sel ? 'bg-[#dae5f8] text-[#1a65e0]' : 'text-[#34455d]'}"><span class="w-[11px] flex justify-center ${sel ? 'text-[#1a65e0]' : 'text-[#6b7785]'}">${ic[n]}</span><span data-g="mi" data-w="${W[n]}">${n}</span></div>`;
  const group = (n, open) => `<div class="h-[18px] leading-[18px] pl-[13.2px] pr-[16.5px] flex items-center justify-between text-[7.4px] font-medium text-[#6d7a8a]"><span data-g="mg" data-w="${n[0] === 'R' ? 31.8 : 29}">${n}</span>${chev(open)}</div>`;
  const side = (sel, open) => `<aside class="w-[140px] shrink-0 bg-[#f3f5f7] flex flex-col">
    <div class="h-[33.8px] pl-[8.8px] leading-[33.4px] text-[9px] font-semibold text-[#2b3b50]"><span data-w="25.8">Menu</span></div>
    ${item('Home', false)}<div class="h-[8.7px]"></div>${group('Registros', true)}
    ${item('Cliente', false)}${item('Fornecedor', sel === 'Fornecedor')}${item('Funcionário', false)}${item('Produto', sel === 'Produto')}
    <div class="h-[8px]"></div>${group('Serviços', open)}
    ${open ? item('Ordem de Serviço', true) + item('Projeto', false) + '<div class="h-[9px]"></div>' : '<div class="h-[9.5px]"></div>'}
    ${item('Agenda', false)}
    <div class="mt-auto mb-[12.5px] h-[12px] pl-[48px] flex items-center gap-[4px] text-[#1a65e0] font-semibold text-[8px]">${svg(10, 10, '0 0 16 16', '<circle cx="9.500" cy="1.700" r="1.700"/><path d="M5 4.500 9.500 3.700l1.800 2.800 2.700.5v1.200l-3.400-.5-.8-1-.8 3 2.500 2V16H9.800v-3.500L7.500 10.800 6.500 13.500 2.500 15.500l-.6-1.200 3.300-1.800L6.800 5.800 5.700 6 4.800 8.500 3.500 8z"/>')}<span data-w="28">Logout</span></div>
  </aside>`;
  const tab = (n, w, sel) => `<span class="h-[21px] flex flex-col items-center justify-between ${sel ? 'text-[#1a65e0] font-semibold' : 'text-[#5d6b7c] font-medium'}"><span class="leading-[14px]" data-w="${w}">${n}</span>${sel ? '<i class="w-[16.5px] h-[1.5px] rounded-t bg-[#6f9df5]"></i>' : ''}</span>`;
  const top = (title, w, tabs, line) => `<div class="h-[30px] shrink-0 border-b border-[#eef0f2] flex items-center pl-[11.5px] gap-[20.5px] text-[9px] font-semibold text-[#2b3b50]"><svg width="9.5" height="8" viewBox="0 0 9.5 8" fill="#5a8ef2"><path d="M0 0h9.500v1.500H0zM0 3.200h9.500v1.500H0zM0 6.400h9.500V8H0z"/></svg><span class="pt-[1.5px]" data-w="${w}">${title}</span></div>
    <div class="mt-[12.2px] h-[21.4px] ml-[8px] ${line} border-b border-[#eceef1] pl-[13.3px] pt-[1px] flex gap-[13.2px] text-[8px]">${tabs}</div>`;
  const scroll = '<div class="absolute right-0 top-[30.5px] bottom-0 w-[8px] bg-[#f3f3f3] flex flex-col items-center"><svg class="mt-[3.5px]" width="4" height="3" viewBox="0 0 4 3" fill="#a3a3a3"><path d="M0 3 2 0 4 3Z"/></svg><i class="mt-[3px] w-full h-[316px] bg-[#c1c1c1]"></i></div>';
  const badge = '<div class="absolute right-[3.5px] bottom-[2px] w-[16px] h-[15.5px] rounded-[4px] bg-[#b9b9b9] flex items-center justify-center"><svg width="9" height="9" viewBox="0 0 9 9" fill="none" stroke="#fff" stroke-width="1.2"><path d="M.8 .8V2H8.200V.8M2.300 4.200 4.500 8 6.700 4.200"/></svg></div>';
  const search = (ph, w) => `<div class="mt-[17px] ml-[495.2px] text-[7.4px]"><div class="h-[12px] leading-[10px] text-[#5d6b7c] font-medium"><span data-w="33">Pesquisar</span></div><div class="flex items-center gap-[8.5px]"><div class="w-[136.6px] h-[21px] rounded-[9px] bg-[#e6e9ed] pl-[7.7px] leading-[21px] text-[8px] text-[#56657a]"><span data-w="${w}">${ph}</span></div><div class="w-[22.5px] h-[20.5px] rounded-[11px] bg-[#0b6bf2] flex items-center justify-center"><svg width="9" height="9" viewBox="0 0 9 9" fill="none" stroke="#fff" stroke-width="1.2"><circle cx="3.800" cy="3.800" r="2.600"/><path d="m5.700 5.700 2.600 2.600"/></svg></div></div></div>`;
  const trash = d => `<span class="w-[22.5px] h-[19.3px] rounded-[2px] flex items-center justify-center ${d ? 'bg-[#d6e4f6]' : 'bg-[#f2f4f6]'}"><svg width="7" height="9" viewBox="0 0 7 9" fill="#dd3232"><path d="M2.300 0h2.400v1H6.500v1.300H.5V1h1.800zM.9 2.800h5.200V9H.9zM2.200 4v3.800h.7V4zM4.100 4v3.800h.7V4z" fill-rule="evenodd"/></svg></span>`;

  /* suppliers */
  const gA = 'grid grid-cols-[159.4px_159.4px_159.4px_1fr] items-center pl-[8.2px]';
  const rowA = (r, sel) => `<div class="${gA} h-[29.05px] shrink-0 ${sel ? 'bg-[#e2effd]' : 'border-b border-[#eceef1]'}"><span data-g="ta"${sel ? ' data-w="86.7"' : ''}>${r[0]}</span><span data-g="ta">${r[1]}</span><span data-g="ta">${r[2]}</span>${trash(sel)}</div>`;
  const fld = (l, v, area, w) => `<div class="w-[104.3px]"><div class="h-[12px] leading-[9px] font-medium text-[#5d6b7c] text-[7px]"><span data-g="fl"${area ? ' data-w="32"' : ''}>${l}</span></div><div class="${area ? 'h-[25px] leading-[12.3px] rounded-[10px]' : 'h-[20.3px] leading-[20px] rounded-[9px]'} border border-[#d8dce1] px-[7px] text-[7.8px]"><span data-g="fv"${w ? ` data-w="${w}"` : ''}>${v}</span></div></div>`;
  $('appA').innerHTML = side('Fornecedor', false) + `<div class="flex-1 min-w-0 flex flex-col">${top('Fornecedor', 50.2, tab('Fornecedores', 53.2, true) + tab('Adicionar Fornecedor', 85.5, false), 'mr-[17.4px]')}${search('Empresa, CNPJ ou IE', 80)}
    <div class="ml-[26.2px] mt-[27.5px] w-[636.8px] text-[7.4px]">
      <div class="${gA} h-[29.5px] font-semibold text-[#34455d]"><span data-g="th" data-w="29.6">Empresa</span><span data-g="th" data-w="33.5">Vendedor</span><span data-g="th" data-w="29">Telefone</span><span data-g="th" data-w="20">Ações</span></div>
      ${rowA(['Rochas Brasileiras Ltda', 'Carlos Silva', '(11) 98765-4321'], true)}
      <div class="h-[69.5px] border-b border-[#eceef1] pl-[17.6px] pt-[20px] flex gap-[9.1px] items-start">${fld('CNPJ', '12.345.678/0001-90', false, 77)}${fld('IE', '123.456.789.000', false, 64)}${fld('Email', 'carlos.silva@rochabras', false, 90)}${fld('Produtos', 'Mármores, granitos e<br>pedras decorativas', true, 84)}</div>
      ${[['Pedras Nobres Comércio', 'Fernanda Santos', '(21) 99876-5432'], ['Granito &amp; Cia', 'Marcelo Andrade', '(31) 91234-5678'], ['Pedra Forte Comércio Ltda.', 'Carlos Eduardo', '(11) 98765-4321'], ['Top Stone Brasil', 'Ana Paula', '(31) 91234-5678'], ['', '', '']].map(r => rowA(r, false)).join('')}
    </div></div>${scroll}${badge}`;

  /* work orders */
  const gB = 'grid grid-cols-[82.3px_124px_87.2px_87.8px_103.1px_76.8px_1fr] items-center pl-[8.2px]';
  const ST = { 'Em_andamento': ['bg-[#fafad2]', 73.5, 63], 'Concluída': ['bg-[#90ee90]', 51.6, 41], Aberta: ['bg-[#add8e6]', 38.4, 27.5], Cancelada: ['bg-[#f08080]', 52.7, 41.5] };
  const sort = ' <svg class="inline-block ml-[3px]" width="4" height="7" viewBox="0 0 4 7" fill="#8a95a3"><path d="M0 3 2 .3 4 3ZM0 4 2 6.700 4 4Z"/></svg>';
  const eye = '<span class="w-[22.5px] h-[22px] rounded-full bg-[#0b6bf2] flex items-center justify-center"><svg width="9" height="7" viewBox="0 0 9 7" fill="#fff"><path d="M.3 3.500C2 .6 7 .6 8.700 3.500 7 6.400 2 6.400 .3 3.500Z"/><circle cx="4.500" cy="3.300" r="1.500" fill="#0b6bf2"/></svg></span>';
  const rowB = r => { const s = ST[r[4]]; return `<div class="${gB} h-[31.15px] shrink-0 border-b border-[#eceef1] text-[7.4px]"><span data-g="tb">${r[0]}</span><span data-g="tb"${r[0] === '25' ? ' data-w="92.5"' : ''}>${r[1]}</span><span data-g="tb">${r[2]}</span><span data-g="tb">${r[3]}</span><span><span class="block h-[16.5px] leading-[16.5px] rounded-[4px] pl-[5.2px] text-black font-bold text-[8px] ${s[0]}" style="width:${s[1]}px"><span data-g="st" data-w="${s[2]}">${r[0] ? r[4] : ''}</span></span></span>${eye}${trash(false)}</div>`; };
  $('appB').innerHTML = side('', true) + `<div class="flex-1 min-w-0 flex flex-col -mt-[0.5px]">${top('Ordem de Servico', 80, tab('Ordens de Serviço', 72.4, true) + tab('Adicionar Ordem de Serviço', 111.4, false), 'mr-[17.4px]')}${search('NumeroOS, Cliente ou Status', 115)}
    <div class="ml-[26.2px] mt-[27px] w-[636.8px] text-[7.4px]">
      <div class="${gB} h-[29.7px] border-b border-[#eceef1] font-semibold text-[#34455d]"><span><span data-g="tc" data-w="40.6">Número OS</span>${sort}</span><span><span data-g="tc" data-w="24.5">Cliente</span>${sort}</span><span data-g="tc" data-w="49">Data Abertura</span><span data-g="tc" data-w="58.3">Data de Previsão</span><span data-g="tc" data-w="21">Status</span><span data-g="tc" data-w="30">Detalhes</span><span data-g="tc" data-w="20.5">Ações</span></div>
      ${[['25', 'Fernanda Martins Souza', '2024-10-01', '2025-01-15', 'Em_andamento'], ['26', 'Mariana Pereira Rocha', '2024-12-05', '2024-12-15', 'Concluída'], ['27', 'Larissa Silva Mendes', '2021-04-03', '2021-04-20', 'Aberta'], ['28', 'Ricardo Santos Almeida', '2023-01-04', '2023-01-20', 'Cancelada'], ['29', 'Gabriel Alves Costa', '2024-02-02', '2024-02-16', 'Concluída'], ['30', 'Gabriel Alves Costa', '2018-03-16', '2018-03-29', 'Aberta'], ['31', 'Fernanda Martins Souza', '2025-01-17', '2025-01-23', 'Cancelada'], ['', '', '', '', 'Concluída']].map(rowB).join('')}
    </div></div>${scroll}${badge}`;

  /* product form */
  const lab = (l, w, req) => `<div class="h-[12px] leading-[9px] text-[7.2px] font-medium text-[#5d6b7c]"><span data-w="${w}">${l}</span>${req ? '<i class="inline-block ml-[3px] mb-[2px] w-[2px] h-[2px] rounded-full bg-[#1a65e0]"></i>' : ''}</div>`;
  const inp = (l, w, req, ph) => `<div>${lab(l, w, req)}<div class="h-[20.7px] leading-[19.5px] rounded-[8px] bg-[#e6e9ed] border border-[#dfe2e7] pl-[7px] text-[8px] text-[#56657a]">${ph ? `<span data-w="101.5">${ph}</span>` : ''}</div></div>`;
  const sel = (l, w, lw) => `<div>${lab(l, w, true)}<div class="h-[20.7px] rounded-[8px] bg-[#e6e9ed] border border-[#dfe2e7] pr-[8px] flex items-center justify-end">${chev(true)}</div><div class="mt-[8.5px] h-[12px] leading-[12px] text-center text-[8px] font-semibold text-[#1a65e0]"><span data-w="${lw}">+ ${l}</span></div></div>`;
  $('appC').innerHTML = side('Produto', false) + `<div class="flex-1 min-w-0 flex flex-col">${top('Produtos', 40, tab('Produtos', 36.2, false) + tab('Adicionar Produto', 72.4, true), 'mr-[8px]')}
    <div class="ml-[49.2px] mt-[18.3px] w-[600.7px] h-[193.7px] rounded-[7px] border border-[#dfe2e6] px-[8.4px] pt-[16.5px]">
      <div class="grid grid-cols-2 gap-x-[13.2px] gap-y-[10px]">${inp('Nome', 21.5, true)}${inp('Custo Unitário', 50.5, false, 'Exemplo: 1000.00 ou 1000')}${inp('Quantidade Atual', 61)}${inp('Quantidade Mínima', 69.5)}</div>
      <div class="mt-[18.8px] grid grid-cols-3 gap-x-[13.7px]">${sel('Material', 28.5, 40)}${sel('Unidade de Medida', 69, 86)}${sel('Modelo', 27, 38)}</div>
    </div>
    <div class="mt-[19.5px] ml-[614.8px] w-[48.8px] h-[20px] leading-[20px] rounded-[9px] bg-[#0b6bf2] text-center text-white text-[8px] font-semibold"><span data-w="24">Salvar</span></div>
    </div>${badge}`;
})();

const fit = () => {
  const k = $('page').getBoundingClientRect().width / 1920, groups = {};
  document.querySelectorAll('[data-w],[data-g]').forEach((e, i) => { (groups[e.dataset.g || '_' + i] ||= []).push(e); });
  const jobs = [];
  Object.values(groups).forEach(list => {
    let want = 0, have = 0;
    list.forEach(e => {
      if (!e.dataset.w || !e.textContent) return;
      const r = document.createRange(); r.selectNodeContents(e);
      want += +e.dataset.w; have += r.getBoundingClientRect().width / k;
    });
    if (have) list.forEach(e => jobs.push([e, parseFloat(getComputedStyle(e).fontSize) * want / have]));
  });
  jobs.forEach(([e, f]) => { e.style.fontSize = f.toFixed(3) + 'px'; });
};
const waitFit = () => getComputedStyle($('page')).width === '1920px' ? fit() : setTimeout(waitFit, 10);
waitFit();
</script>
</body>
</html>
